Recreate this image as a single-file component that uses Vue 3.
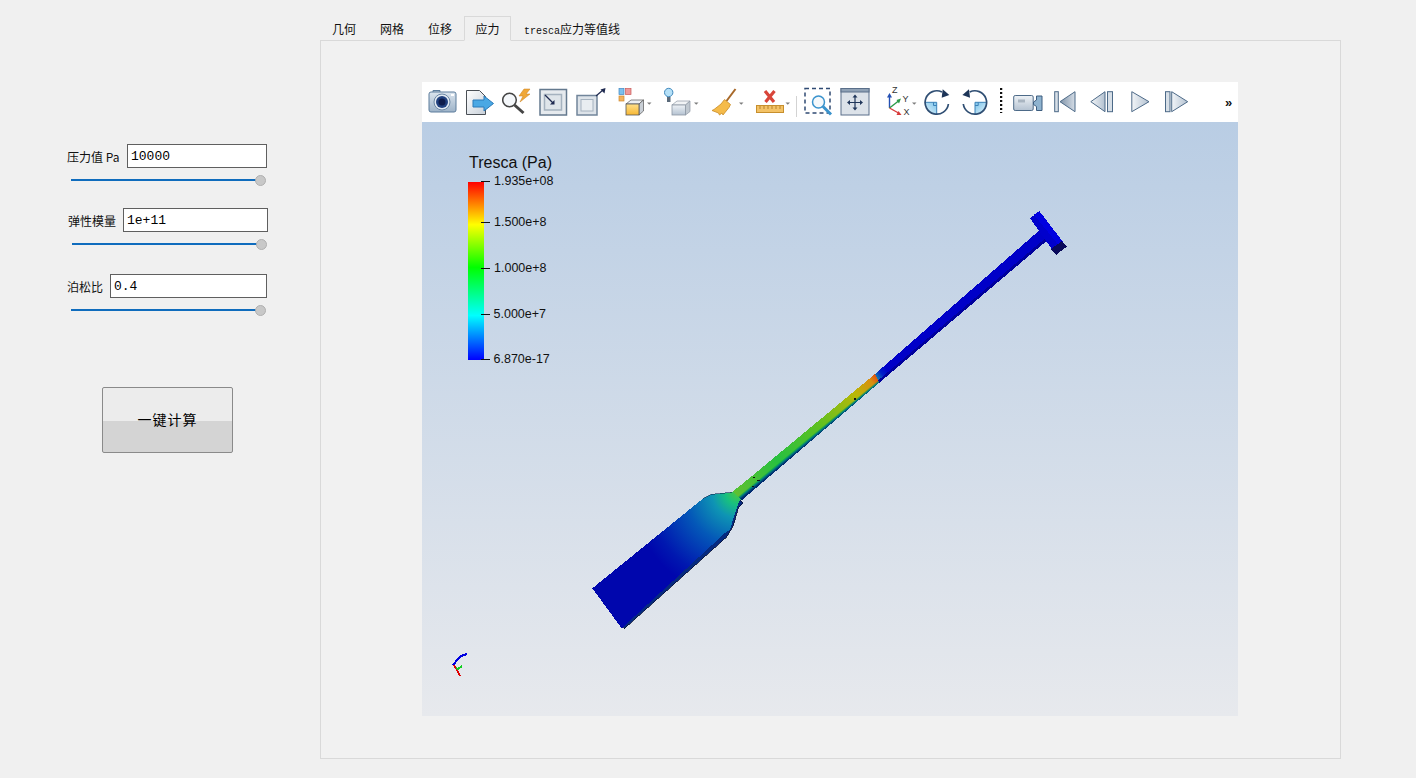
<template>
  <div class="page">
    <svg class="defs" width="0" height="0" aria-hidden="true">
      <defs>
        <linearGradient id="gMetal" x1="0" y1="0" x2="0" y2="1"><stop offset="0" stop-color="#eef2f6" /><stop offset="1" stop-color="#b4c2d1" /></linearGradient>
        <linearGradient id="gCam" x1="0" y1="0" x2="0" y2="1"><stop offset="0" stop-color="#dbe5ee" /><stop offset="1" stop-color="#9db3c8" /></linearGradient>
        <linearGradient id="gDoc" x1="0" y1="0" x2="1" y2="1"><stop offset="0" stop-color="#ffffff" /><stop offset="1" stop-color="#c8d0d9" /></linearGradient>
        <linearGradient id="gYellow" x1="0" y1="0" x2="0" y2="1"><stop offset="0" stop-color="#ffe08a" /><stop offset="1" stop-color="#f7b733" /></linearGradient>
        <linearGradient id="gPlay" x1="0" y1="0" x2="1" y2="0"><stop offset="0" stop-color="#f2f5f8" /><stop offset="1" stop-color="#b3c1d0" /></linearGradient>
        <linearGradient id="gFirst" x1="0" y1="0" x2="1" y2="0"><stop offset="0" stop-color="#8093a8" /><stop offset="1" stop-color="#d5dde6" /></linearGradient>
        <linearGradient id="gWedge" x1="0" y1="1" x2="1" y2="0"><stop offset="0" stop-color="#e2f3fb" /><stop offset="1" stop-color="#7cc4ea" /></linearGradient>
      </defs>
    </svg>

    <aside class="side">
      <div v-for="f in fields" :key="f.label" class="field" :class="f.cls">
        <div class="field-row">
          <span class="field-label">{{ f.label }}</span>
          <input class="field-input" type="text" :value="f.value" readonly>
        </div>
        <div class="slider"><span class="slider-knob"></span></div>
      </div>
      <button class="calc">一键计算</button>
    </aside>

    <main class="main">
      <div class="tabs">
        <span v-for="t in tabs" :key="t" class="tab" :class="{ active: t === '应力' }">{{ t }}</span>
        <span class="tab tab-wide"><span class="latin">tresca</span>应力等值线</span>
      </div>
      <section class="pane">
        <div class="viewer">
          <div class="toolbar">
            <!-- camera -->
            <svg width="38" height="40">
              <path d="M5 10V8.500h7V10" fill="#b7c7d7" stroke="#5d7d9c" />
              <rect x="1" y="10" width="27" height="20" rx="2" fill="url(#gCam)" stroke="#5d7d9c" />
              <circle cx="14" cy="20" r="8" fill="#e2eaf2" stroke="#6d88a5" />
              <circle cx="14" cy="20" r="6" fill="#21417f" />
              <circle cx="14" cy="20" r="3.500" fill="#0e1c4b" />
              <rect x="23" y="12" width="3" height="2" fill="#fff" />
            </svg>
            <!-- save data -->
            <svg width="36" height="40">
              <path d="M.5 8.500h13l6 6v18H.5z" fill="url(#gDoc)" stroke="#4a4f55" />
              <path d="M7 18h11v-4l9.500 7.500L18 29v-4H7z" fill="#4aa8e4" stroke="#2a7ab9" />
            </svg>
            <!-- reset on data -->
            <svg width="37" height="40">
              <circle cx="7.500" cy="18" r="6.800" fill="#f4f7fa" stroke="#444" stroke-width="1.500" />
              <path d="M12.500 23l9 8" stroke="#444" stroke-width="3" />
              <path d="M22 7l-5 7h4l-3 6 10-8h-4l4-5z" fill="#f0a838" stroke="#c97f1c" stroke-width=".5" />
            </svg>
            <!-- reset camera -->
            <svg width="37" height="40">
              <rect x="1" y="7.500" width="26.500" height="25.500" fill="#e6eaee" stroke="#64798e" stroke-width="1.500" />
              <rect x="5.500" y="12.500" width="17" height="15.500" fill="#dfe5ea" stroke="#a5b2bf" stroke-width="1.500" />
              <path d="M6 13l8 8" stroke="#1f2a50" stroke-width="1.200" />
              <path d="M15.500 22.500h-4.500l4.500-4.500z" fill="#1f2a50" />
            </svg>
            <!-- zoom to box -->
            <svg width="41" height="40">
              <rect x="1" y="13.500" width="20" height="19.500" fill="#dde3e9" stroke="#71859a" stroke-width="1.500" />
              <rect x="5" y="17.500" width="12" height="11.500" fill="#e9edf1" stroke="#a5b2bf" />
              <path d="M20 14l7-6" stroke="#1f2a50" stroke-width="1.200" />
              <path d="M29.500 6l-1 5.500-4-4z" fill="#1f2a50" />
            </svg>
            <!-- selection cube -->
            <svg width="47" height="40">
              <rect x="2" y="6.500" width="5" height="6" fill="#7cc0ee" stroke="#4187c2" stroke-width=".7" />
              <rect x="8.500" y="6.500" width="5.500" height="6" fill="#ef9a9a" stroke="#c85a5a" stroke-width=".7" />
              <rect x="2" y="14" width="5" height="5" fill="#f3b35f" stroke="#cf8a30" stroke-width=".7" />
              <path d="M9 22l5-4h12.500l-4.500 4z" fill="#eceff2" stroke="#555" stroke-width=".7" />
              <path d="M22 22l4.500-4v11L22 33z" fill="#c9cfd6" stroke="#555" stroke-width=".7" />
              <rect x="9" y="22" width="13" height="11" fill="url(#gYellow)" stroke="#555" stroke-width=".8" />
              <path d="M30 20.500h4.500l-2.250 2.200z" fill="#7d7d7d" />
            </svg>
            <!-- light cube -->
            <svg width="47" height="40">
              <circle cx="4.700" cy="10.500" r="4.200" fill="#b5e0f7" stroke="#3f88bd" />
              <rect x="3" y="15" width="3.500" height="5" fill="#5a6a7a" />
              <path d="M8 23l5-4h13l-4.500 4z" fill="#f1f3f5" stroke="#8c97a3" stroke-width=".7" />
              <path d="M21.500 23l4.500-4v10.500L21.500 33z" fill="#c0c8d0" stroke="#8c97a3" stroke-width=".7" />
              <rect x="8" y="23" width="13.500" height="10" fill="url(#gMetal)" stroke="#8c97a3" stroke-width=".8" />
              <path d="M30 20.500h4.500l-2.250 2.200z" fill="#7d7d7d" />
            </svg>
            <!-- broom -->
            <svg width="44" height="40">
              <path d="M24.500 7l-9 12" stroke="#a8692a" stroke-width="2" />
              <path d="M13.500 17.500l6 5-1.500 3-6 7.500-1-2-2.500 2-1-2L1 28.500l2-1L10 22z" fill="#f5bb4a" stroke="#c98b25" stroke-width=".8" />
              <path d="M28 20.500h4.500l-2.250 2.200z" fill="#7d7d7d" />
            </svg>
            <!-- ruler -->
            <svg width="41" height="40">
              <path d="M10 9l9 11M19.500 9l-9 11" stroke="#d8453a" stroke-width="3.200" />
              <rect x="1.500" y="23.500" width="27" height="7" fill="#f3c266" stroke="#c78f2d" />
              <path d="M5 24v3M9 24v3M13 24v3M17 24v3M21 24v3M25 24v3" stroke="#a9741f" stroke-width=".8" />
              <path d="M30.500 20.500h4.500l-2.250 2.200z" fill="#7d7d7d" />
            </svg>
            <svg width="8" height="40"><path d="M.5 14v21" stroke="#d3d3d3" /></svg>
            <!-- zoom rubber band -->
            <svg width="36" height="40">
              <rect x="1" y="6.500" width="25" height="24.500" fill="none" stroke="#2f4a73" stroke-width="1.500" stroke-dasharray="4 3" />
              <circle cx="14.500" cy="20" r="6" fill="#f4f8fb" stroke="#3a93cd" stroke-width="1.500" />
              <path d="M19 24.500l8 8" stroke="#3a93cd" stroke-width="3" />
            </svg>
            <!-- center of rotation -->
            <svg width="46" height="40">
              <rect x="1" y="6.500" width="28" height="26.500" fill="#dce2e9" stroke="#5a6f8a" />
              <rect x="1" y="6.500" width="28" height="3.500" fill="#8fa1b5" stroke="#5a6f8a" />
              <path d="M15 14v13M8.500 20.500h13" stroke="#20365a" stroke-width="1.200" />
              <path d="M15 12.500l2.500 3h-5zM15 28.500l2.500-3h-5zM7 20.500l3-2.500v5zM23 20.500l-3-2.500v5z" fill="#20365a" />
            </svg>
            <!-- axes -->
            <svg width="38" height="40" class="axes-ico">
              <path d="M3.500 26V14" stroke="#2450b4" stroke-width="1.400" />
              <path d="M3.500 11l2.500 4.500H1z" fill="#2450b4" />
              <path d="M3.500 26l9-7" stroke="#2a9a48" stroke-width="1.400" />
              <path d="M15 16.500l-2 5-2.500-3.500z" fill="#2a9a48" />
              <path d="M3.500 26l9 5" stroke="#d83a3a" stroke-width="1.400" />
              <path d="M15.500 33l-5 0 2-4z" fill="#d83a3a" />
              <text x="6" y="11">Z</text>
              <text x="16.500" y="20">Y</text>
              <text x="17.500" y="33">X</text>
              <path d="M26 20.500h4.500l-2.250 2.200z" fill="#7d7d7d" />
            </svg>
            <!-- rotate cw -->
            <svg width="37" height="40">
              <path d="M1 20.300A11.700 11.700 0 0 0 12.700 32V20.300z" fill="url(#gWedge)" />
              <path d="M1 20.300h11.700V32M9.500 20.300v3.200h3.200" fill="none" stroke="#3d82b8" />
              <path d="M24.400 22A11.700 11.700 0 1 1 18 10" fill="none" stroke="#2f4e73" stroke-width="1.700" />
              <path d="M18.700 7.300l6.600 5.700-7.600 2.700z" fill="#1d3558" />
            </svg>
            <!-- rotate ccw -->
            <svg width="39" height="40">
              <g transform="translate(26.700 0) scale(-1 1)">
                <path d="M1 20.300A11.700 11.700 0 0 0 12.700 32V20.300z" fill="url(#gWedge)" />
                <path d="M1 20.300h11.700V32M9.500 20.300v3.200h3.200" fill="none" stroke="#3d82b8" />
                <path d="M24.400 22A11.700 11.700 0 1 1 18 10" fill="none" stroke="#2f4e73" stroke-width="1.700" />
                <path d="M18.700 7.300l6.600 5.700-7.600 2.700z" fill="#1d3558" />
              </g>
            </svg>
            <svg width="13" height="40"><path d="M1 6v25" stroke="#111" stroke-width="2.500" stroke-dasharray="2 2" /></svg>
            <!-- animation camera -->
            <svg width="41" height="40">
              <rect x=".7" y="13.500" width="19.500" height="15" rx="1.500" fill="url(#gMetal)" stroke="#4d6a88" />
              <rect x="5" y="17.500" width="7" height="3" fill="#a9b5c1" />
              <path d="M20.500 20l3-2v-4h5.500v14.500h-5.500v-4l-3-2z" fill="#8fb3cf" stroke="#3d5d7f" />
            </svg>
            <!-- first frame -->
            <svg width="36" height="40">
              <rect x=".7" y="9.700" width="3.600" height="20" fill="#d7dfe7" stroke="#4d6a88" />
              <path d="M21 9.700v20L6 19.700z" fill="url(#gFirst)" stroke="#4d6a88" />
            </svg>
            <!-- previous frame -->
            <svg width="41" height="40">
              <path d="M15 9.700v20L.8 19.700z" fill="url(#gPlay)" stroke="#4d6a88" />
              <rect x="17.500" y="9.700" width="5" height="20" fill="#d7dfe7" stroke="#4d6a88" />
            </svg>
            <!-- play -->
            <svg width="34" height="40">
              <path d="M.8 9.700v20L18 19.700z" fill="url(#gPlay)" stroke="#4d6a88" />
            </svg>
            <!-- next frame -->
            <svg width="60" height="40">
              <rect x=".5" y="9.700" width="4.500" height="20" fill="#d7dfe7" stroke="#4d6a88" />
              <path d="M6.700 9.700v20L22.700 19.700z" fill="url(#gPlay)" stroke="#4d6a88" />
            </svg>
            <span class="more">»</span>
          </div>

          <svg class="scene" width="816" height="594" viewBox="422 122 816 594">
            <defs>
              <linearGradient id="gBar" x1="0" y1="0" x2="0" y2="1">
                <stop offset="0" stop-color="#ff0000" />
                <stop offset=".24" stop-color="#ffff00" />
                <stop offset=".48" stop-color="#00ff00" />
                <stop offset=".75" stop-color="#00ffff" />
                <stop offset="1" stop-color="#0000ff" />
              </linearGradient>
              <radialGradient id="gBlade" gradientUnits="userSpaceOnUse" cx="738" cy="492" r="105">
                <stop offset="0" stop-color="#50c838" />
                <stop offset=".12" stop-color="#18c080" />
                <stop offset=".25" stop-color="#0e94b4" />
                <stop offset=".5" stop-color="#0458b8" />
                <stop offset=".85" stop-color="#0018b0" />
                <stop offset="1" stop-color="#0006ad" />
              </radialGradient>
              <linearGradient id="gNeck" gradientUnits="userSpaceOnUse" x1="735" y1="495" x2="878" y2="378">
                <stop offset="0" stop-color="#60c030" />
                <stop offset=".3" stop-color="#28c040" />
                <stop offset=".6" stop-color="#60c020" />
                <stop offset=".85" stop-color="#b8b808" />
                <stop offset=".96" stop-color="#d89010" />
                <stop offset="1" stop-color="#e05010" />
              </linearGradient>
              <linearGradient id="gNeckEdge" gradientUnits="userSpaceOnUse" x1="800" y1="436.300" x2="806.800" y2="444.500">
                <stop offset="0" stop-color="#00a040" stop-opacity="0" />
                <stop offset=".62" stop-color="#00a040" stop-opacity="0" />
                <stop offset=".8" stop-color="#008080" />
                <stop offset="1" stop-color="#002a70" />
              </linearGradient>
              <linearGradient id="gJoint" gradientUnits="userSpaceOnUse" x1="873" y1="379" x2="886" y2="368">
                <stop offset="0" stop-color="#20b0a0" />
                <stop offset=".6" stop-color="#0020c8" />
                <stop offset="1" stop-color="#0000c8" />
              </linearGradient>
              <linearGradient id="gBg" x1="0" y1="0" x2="0" y2="1">
                <stop offset="0" stop-color="#b9cde4" />
                <stop offset="1" stop-color="#e7e9ed" />
              </linearGradient>
            </defs>
            <rect x="422" y="122" width="816" height="594" fill="url(#gBg)" />

            <!-- scalar bar -->
            <text class="bar-title" x="469" y="168">Tresca (Pa)</text>
            <rect x="468" y="182" width="16" height="178" fill="url(#gBar)" />
            <path d="M481 181.500h9M481 222.500h9M481 268.500h9M481 314.500h9M481 359.500h9" stroke="#111" />
            <text class="bar-label" x="494" y="185">1.935e+08</text>
            <text class="bar-label" x="494" y="226">1.500e+8</text>
            <text class="bar-label" x="494" y="272">1.000e+8</text>
            <text class="bar-label" x="493.500" y="318">5.000e+7</text>
            <text class="bar-label" x="493.500" y="363">6.870e-17</text>

            <!-- paddle model -->
            <g shape-rendering="crispEdges">
              <path d="M621.700 620 720 530 728 525 733 510 738 498 743 503 738.300 508 733.300 526 726.700 537 624.300 628.700z" fill="#062a80" stroke="#0a1230" stroke-width=".8" />
              <path d="M592.300 588.300 703.300 498.300 711.700 494.300 731.700 492.300 737 488 742 497 738.500 503 735 513 730 530 725 533 621.700 628.300z" fill="url(#gBlade)" />
              <path d="M703.300 498.300 711.700 494.300 731.700 492.300" fill="none" stroke="#0a2a50" stroke-width=".6" />
              <path d="M733 491.700 875 374 879.500 382.500 742 500z" fill="url(#gNeck)" />
              <path d="M733 491.700 875 374 879.500 382.500 742 500z" fill="url(#gNeckEdge)" />
              <path d="M875 374 1042 228 1050 238 879.500 382.500z" fill="url(#gJoint)" />
              <path d="M879.500 382.500 1050 238 1048 236 878 380.500z" fill="#00009c" />
              <path d="M1030 218.300 1039.300 211 1066.700 246.700 1056 255z" fill="#0000cc" />
              <path d="M1034 214.800 1039.300 211 1066.700 246.700 1062.500 250z" fill="#0000e0" />
              <path d="M1051 249 1062 241 1066.700 246.700 1056 255z" fill="#09095a" />
              <rect x="753" y="477" width="2" height="1" fill="#111" />
              <rect x="757" y="480" width="3" height="1" fill="#111" />
              <rect x="752" y="486" width="2" height="1" fill="#111" />
              <rect x="854" y="398" width="2" height="2" fill="#111" />
            </g>

            <!-- orientation axes -->
            <g shape-rendering="crispEdges" stroke-width="2" fill="none">
              <path d="M453 665 458 659 461 656 467 654" stroke="#0000e0" />
              <path d="M454 665 457 670 460 676" stroke="#e00000" />
              <path d="M456 668 458 669 462 666" stroke="#10d020" />
            </g>
          </svg>
        </div>
      </section>
    </main>
  </div>
</template>

<script setup>
const fields = [
  { label: '压力值 Pa', value: '10000', cls: 'f-pressure' },
  { label: '弹性模量', value: '1e+11', cls: 'f-modulus' },
  { label: '泊松比', value: '0.4', cls: 'f-poisson' },
]

const tabs = ['几何', '网格', '位移', '应力']
</script>

<style>
html, body {
  background: #f0f0f0;
}
</style>

<style scoped>
.page {
  display: flex;
  width: 1416px;
  height: 778px;
  overflow: hidden;
  background: #f0f0f0;
  font-family: "Noto Sans CJK SC", "Liberation Sans", sans-serif;
  color: #111;
}

.defs {
  position: absolute;
}

.side {
  width: 320px;
  flex: none;
  padding-top: 144px;
  box-sizing: border-box;
}

.field {
  margin-left: 67px;
  margin-bottom: 27px;
}

.field-row {
  display: flex;
  align-items: center;
  height: 24px;
}

.field-label {
  flex: none;
  font-size: 12px;
  white-space: nowrap;
}

.field-input {
  box-sizing: border-box;
  height: 24px;
  padding: 0 3px;
  border: 1px solid #5f5f5f;
  border-radius: 0;
  outline: none;
  background: #fff;
  font-family: "Liberation Mono", monospace;
  font-size: 13px;
  color: #000;
}

.f-pressure .field-label { width: 60px; }
.f-pressure .field-input { width: 140px; }
.f-modulus { margin-left: 68px; margin-bottom: 29px; }
.f-modulus .field-label { width: 55px; }
.f-modulus .field-input { width: 145px; }
.f-poisson { margin-bottom: 76px; }
.f-poisson .field-label { width: 43px; }
.f-poisson .field-input { width: 157px; }

.slider {
  position: relative;
  width: 185px;
  height: 2px;
  margin: 11px 0 0 4px;
  background: #0f6cbd;
}

.slider-knob {
  position: absolute;
  right: -10px;
  top: -4px;
  box-sizing: border-box;
  width: 11px;
  height: 11px;
  border: 1px solid #b0b0b0;
  border-radius: 50%;
  background: #c8c8c8;
}

.calc {
  display: block;
  box-sizing: border-box;
  width: 131px;
  height: 66px;
  margin-left: 102px;
  padding: 0 0 2px;
  border: 1px solid #8a8a8a;
  border-radius: 2px;
  background: linear-gradient(#ececec 0 51%, #d4d4d4 51% 100%);
  font-family: inherit;
  font-size: 14px;
  letter-spacing: 1px;
  color: #000;
}

.main {
  width: 1021px;
  flex: none;
  padding-top: 16px;
}

.tabs {
  display: flex;
  height: 24px;
}

.tab {
  box-sizing: border-box;
  width: 48px;
  height: 25px;
  line-height: 26px;
  text-align: center;
  font-size: 12px;
  color: #111;
  position: relative;
  z-index: 1;
}

.tab.active {
  width: 47px;
  border: 1px solid #d9d9d9;
  border-bottom: 1px solid #f0f0f0;
  line-height: 24px;
}

.tab-wide {
  width: 122px;
}

.latin {
  font-family: "Liberation Mono", monospace;
  font-size: 10px;
}

.pane {
  box-sizing: border-box;
  height: 719px;
  padding: 41px 0 0 101px;
  border: 1px solid #d9d9d9;
  background: #f1f1f1;
}

.viewer {
  width: 816px;
}

.toolbar {
  display: flex;
  align-items: center;
  box-sizing: border-box;
  height: 40px;
  padding-left: 6px;
  background: #fff;
}

.toolbar svg {
  flex: none;
}

.axes-ico text {
  font-family: "Liberation Sans", sans-serif;
  font-size: 9px;
  fill: #333;
}

.more {
  font-family: "Liberation Sans", sans-serif;
  font-size: 13px;
  font-weight: 700;
  color: #111;
}

.scene {
  display: block;
}

.bar-title {
  font-family: "Liberation Sans", sans-serif;
  font-size: 16px;
  fill: #111;
}

.bar-label {
  font-family: "Liberation Sans", sans-serif;
  font-size: 12.5px;
  fill: #111;
}
</style>
